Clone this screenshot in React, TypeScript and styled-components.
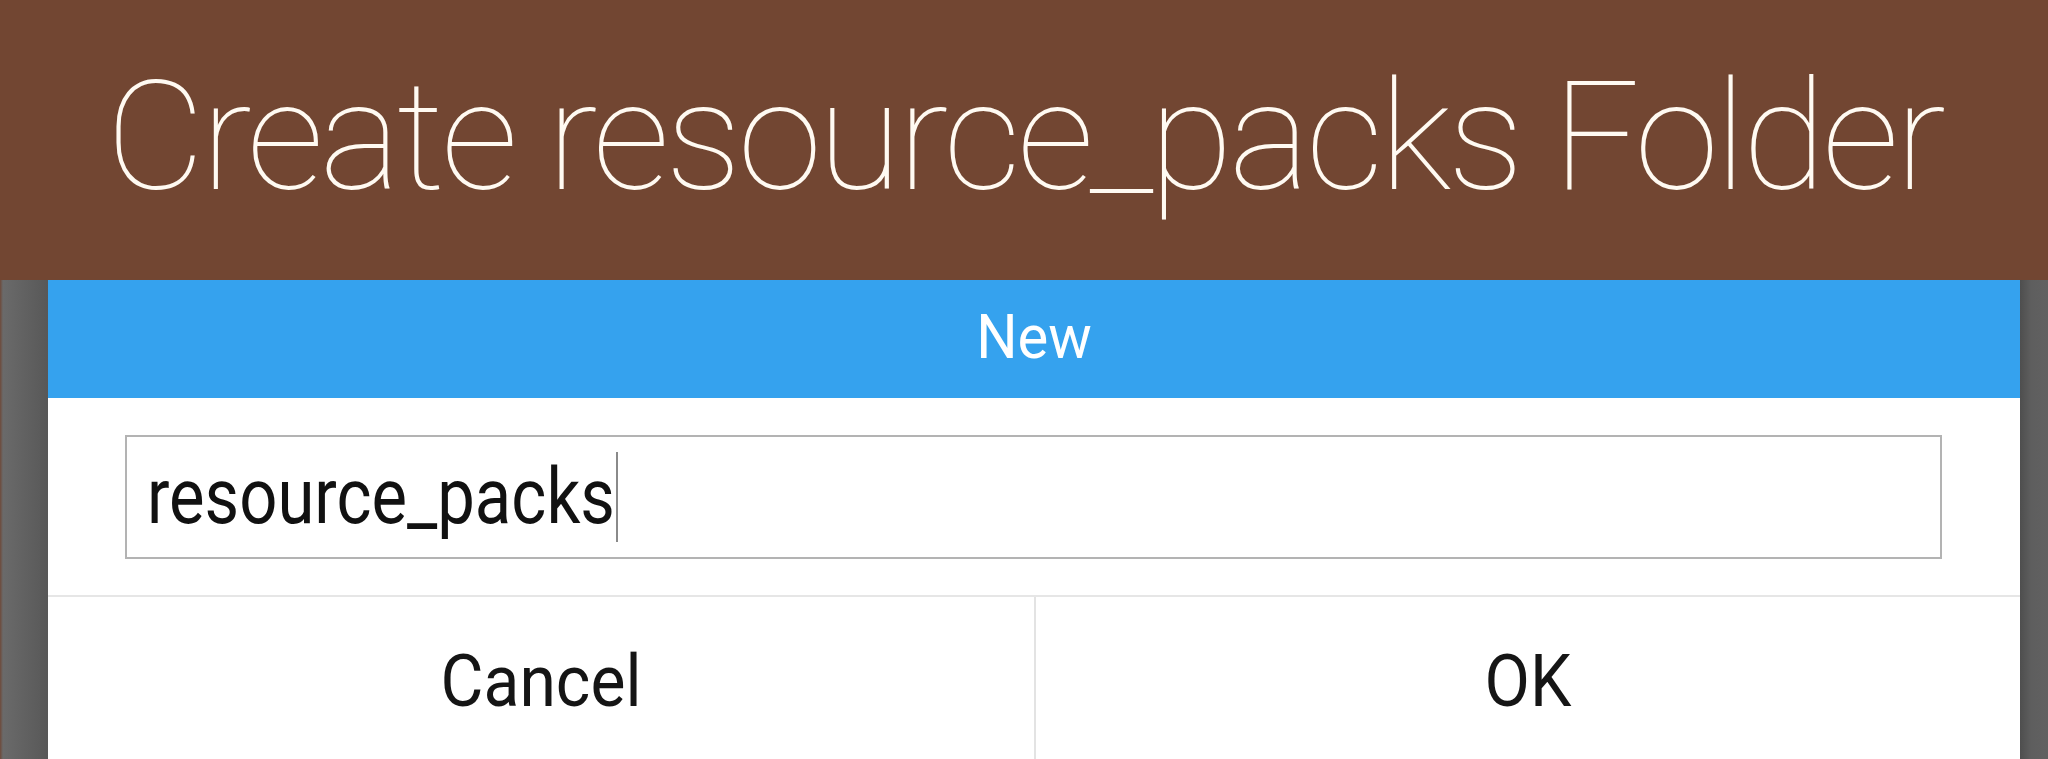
import styled, { createGlobalStyle } from "styled-components";

const GlobalStyle = createGlobalStyle`
  html, body {
    margin: 0;
    padding: 0;
    background: #5c5c5c;
  }
  body {
    font-family: Roboto, "Liberation Sans", sans-serif;
  }
`;

const App = () => {
  return (
    <Page>
      <GlobalStyle />
      <Banner>
        <BannerTitle>Create resource_packs Folder</BannerTitle>
      </Banner>

      <Stage>
        <SideStrip side="left" />
        <Dialog>
          <DialogTitle>
            <TitleText>New</TitleText>
          </DialogTitle>
          <DialogBody>
            <NameField>
              <FieldText>resource_packs</FieldText>
              <Caret />
            </NameField>
          </DialogBody>
          <Actions>
            <ActionButton>
              <ButtonLabel>Cancel</ButtonLabel>
            </ActionButton>
            <ActionButton divided>
              <ButtonLabel>OK</ButtonLabel>
            </ActionButton>
          </Actions>
        </Dialog>
        <SideStrip side="right" />
      </Stage>
    </Page>
  );
};

export default App;

const Page = styled.div`
  width: 2048px;
  height: 759px;
  overflow: hidden;
  display: flex;
  flex-direction: column;
`;

const Banner = styled.header`
  height: 280px;
  flex: none;
  background: #724632;
  display: flex;
  align-items: center;
  justify-content: center;
  padding-bottom: 8px;
  box-sizing: border-box;
`;

const BannerTitle = styled.h1`
  margin: 0;
  font-family: Roboto, "Liberation Sans", sans-serif;
  font-weight: 100;
  font-size: 153px;
  letter-spacing: -4px;
  line-height: 1;
  color: #fffaf2;
  white-space: nowrap;
`;

const Stage = styled.div`
  flex: 1;
  display: flex;
  min-height: 0;
`;

const SideStrip = styled.div<{ side: "left" | "right" }>`
  flex: none;
  width: ${(p) => (p.side === "left" ? "48px" : "28px")};
  background: ${(p) =>
    p.side === "left"
      ? "linear-gradient(90deg, #6e4a3a 0px, #6a6a6a 3px, #585858 100%)"
      : "linear-gradient(90deg, #4e4e4e 0px, #5e5e5e 40%, #616161 100%)"};
`;

const Dialog = styled.section`
  flex: 1;
  background: #ffffff;
  display: flex;
  flex-direction: column;
`;

const DialogTitle = styled.div`
  height: 118px;
  flex: none;
  background: #35a2ee;
  color: #ffffff;
  display: flex;
  align-items: center;
  justify-content: center;
  padding-bottom: 4px;
  box-sizing: border-box;
`;

const TitleText = styled.span`
  font-size: 58px;
  line-height: 1;
  transform: scaleY(1.06);
`;

const DialogBody = styled.div`
  padding: 37px 78px 36px 77px;
  border-bottom: 2px solid #e6e6e6;
`;

const NameField = styled.div`
  height: 124px;
  box-sizing: border-box;
  border: 2px solid #b3b3b3;
  display: flex;
  align-items: center;
  padding-left: 20px;
`;

const FieldText = styled.span`
  font-size: 67px;
  color: #111111;
  line-height: 1;
  transform: scaleY(1.15);
`;

const Caret = styled.span`
  width: 2px;
  height: 90px;
  background: #8a8a8a;
  margin-left: 1px;
`;

const Actions = styled.div`
  flex: 1;
  display: grid;
  grid-template-columns: 1fr 1fr;
`;

const ActionButton = styled.div<{ divided?: boolean }>`
  display: flex;
  justify-content: center;
  align-items: flex-start;
  padding-top: 52px;
  border-left: ${(p) => (p.divided ? "2px solid #e3e3e3" : "none")};
`;

const ButtonLabel = styled.span`
  font-size: 66px;
  line-height: 1;
  color: #151515;
  transform: scaleY(1.1);
`;
